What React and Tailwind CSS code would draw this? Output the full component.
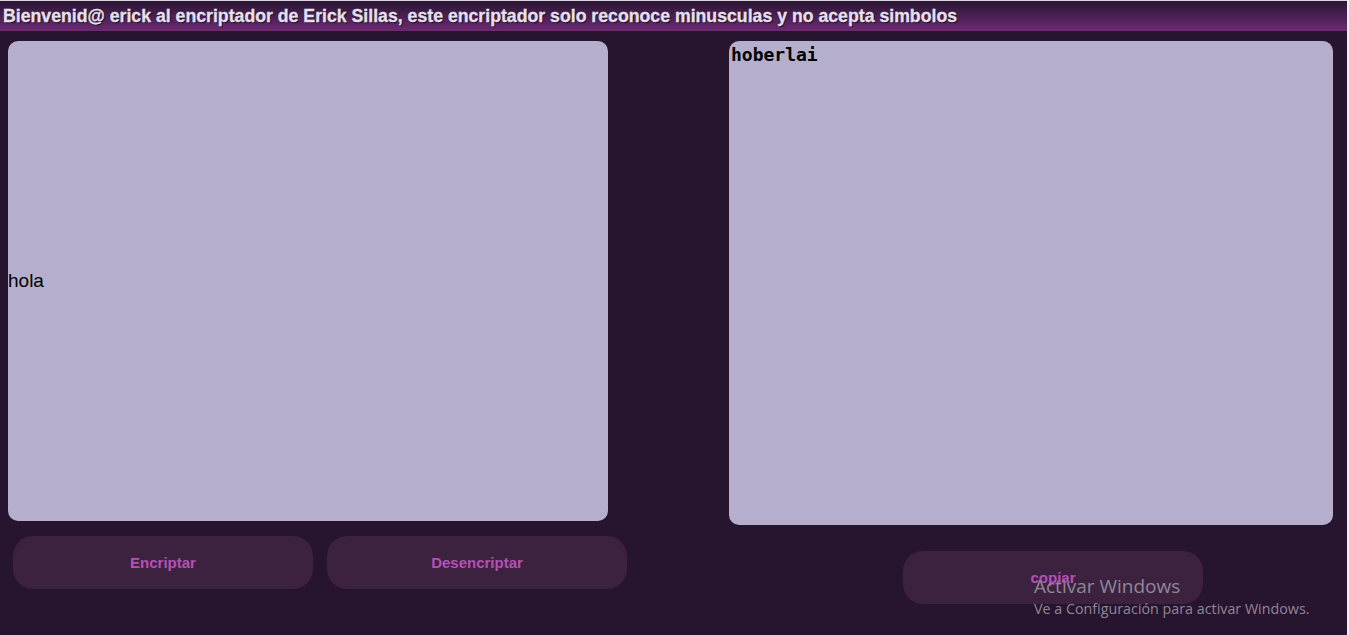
import { useState } from 'react';

// Paleta tomada de la captura
const panel = 'bg-[#b5afcd] rounded-[10px]';
const boton =
	'h-[53px] w-[300px] rounded-[20px] bg-[#3d2240] text-[#b550b5] text-[15px] font-bold flex items-center justify-center pt-px';

const App = () => {
	const [entrada] = useState('hola');
	const [salida] = useState('hoberlai');

	return (
		<div className="flex w-[1349px] h-[635px] overflow-hidden bg-[#efefef]">
			<div className="relative w-[1347px] h-full flex flex-col bg-[#27142e]">
				<div className="h-px bg-[#d9d6dc]" />

				{/* Encabezado */}
				<header className="h-[30px] flex items-center px-[3px] bg-gradient-to-b from-[#2a1634] to-[#6c2a72]">
					<h1
						className="text-[17.7px] font-bold text-[#e6e0f0] whitespace-nowrap [text-shadow:1px_1px_1px_#1a0a1e] [-webkit-text-stroke:0.3px_#e6e0f0]"
						style={{ fontFamily: '"Liberation Sans", Arial, sans-serif' }}
					>
						Bienvenid@ erick al encriptador de Erick Sillas, este encriptador solo reconoce minusculas y no acepta simbolos
					</h1>
				</header>

				<main className="flex pt-[10px]">
					{/* Entrada */}
					<section className="flex flex-col ml-[8px]">
						<div className={`${panel} w-[600px] h-[480px] flex items-center`}>
							<span className="text-[19px] text-black" style={{ fontFamily: '"Liberation Sans", Arial, sans-serif' }}>
								{entrada}
							</span>
						</div>
						<div className="flex gap-[14px] mt-[15px] ml-[5px]" style={{ fontFamily: '"Liberation Sans", Arial, sans-serif' }}>
							<button className={boton}>Encriptar</button>
							<button className={boton}>Desencriptar</button>
						</div>
					</section>

					{/* Salida */}
					<section className="flex flex-col ml-[102px]">
						<div className={`${panel} w-[604px] h-[484px] px-[2px] pt-[3px]`}>
							<pre className="text-[18px] font-bold text-black leading-[22px]" style={{ fontFamily: '"DejaVu Sans Mono", monospace' }}>
								{salida}
							</pre>
						</div>
						<div className="mt-[26px] ml-[174px]" style={{ fontFamily: '"Liberation Sans", Arial, sans-serif' }}>
							<button className={boton}>copiar</button>
						</div>
					</section>
				</main>

				{/* Marca de agua de Windows */}
				<div className="absolute left-[1034px] top-[574px] text-[#8f8797] pointer-events-none" style={{ fontFamily: '"Open Sans", "Noto Sans", sans-serif' }}>
					<p className="text-[19px] leading-[24px]">Activar Windows</p>
					<p className="text-[14.3px] leading-[18px] mt-[2px]">Ve a Configuración para activar Windows.</p>
				</div>
			</div>
		</div>
	);
};

export default App;
